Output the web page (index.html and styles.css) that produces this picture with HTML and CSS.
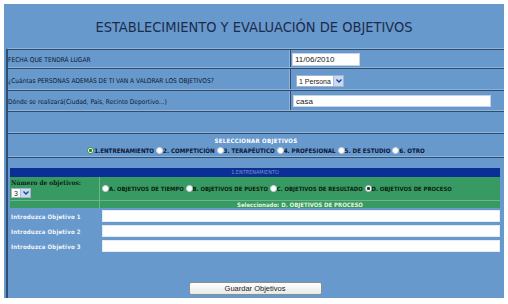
FILE: index.html
```html
<!DOCTYPE html>
<html lang="es">
<head>
    <meta charset="UTF-8">
    <title>Establecimiento y Evaluación de Objetivos</title>
    <link rel="stylesheet" href="styles.css">
</head>
<body>
    <div class="page">
        <h1 class="title">ESTABLECIMIENTO Y EVALUACIÓN DE OBJETIVOS</h1>

        <form class="frame">
            <div class="row r1">
                <div class="lbl">FECHA QUE TENDRÁ LUGAR</div>
                <div class="val"><input class="txt date" type="text" value="11/06/2010"></div>
            </div>
            <div class="row r2">
                <div class="lbl">¿Cuántas PERSONAS ADEMÁS DE TI VAN A VALORAR LOS OBJETIVOS?</div>
                <div class="val">
                    <div class="select persons"><span class="opt">1 Persona</span><span class="arrow"><svg width="6" height="4" viewBox="0 0 6 4"><path d="M0.5 0.5 L3 3 L5.5 0.5" fill="none" stroke="#1d3f8a" stroke-width="1.3"/></svg></span></div>
                </div>
            </div>
            <div class="row r3">
                <div class="lbl">Dónde se realizará(Ciudad, País, Recinto Deportivo...)</div>
                <div class="val"><input class="txt place" type="text" value="casa"></div>
            </div>
            <div class="row r4"></div>
            <div class="row r5">
                <div class="choose">
                    <div class="choose-title">SELECCIONAR OBJETIVOS</div>
                    <div class="options">
                        <span class="radio sel"></span>1.ENTRENAMIENTO
                        <span class="radio"></span>2. COMPETICIÓN
                        <span class="radio"></span>3. TERAPÉUTICO
                        <span class="radio"></span>4. PROFESIONAL
                        <span class="radio"></span>5. DE ESTUDIO
                        <span class="radio"></span>6. OTRO
                    </div>
                </div>
            </div>
            <div class="row r6">
                <div class="inner">
                    <div class="inner-head">1.ENTRENAMIENTO</div>
                    <div class="green g1">
                        <div class="gleft">
                            <div class="num-label">Número de objetivos:</div>
                            <div class="select num"><span class="opt">3</span><span class="arrow"><svg width="6" height="4" viewBox="0 0 6 4"><path d="M0.5 0.5 L3 3 L5.5 0.5" fill="none" stroke="#1d3f8a" stroke-width="1.3"/></svg></span></div>
                        </div>
                        <div class="gright kinds">
                            <span class="radio"></span>A. OBJETIVOS DE TIEMPO
                            <span class="radio"></span>B. OBJETIVOS DE PUESTO
                            <span class="radio"></span>C. OBJETIVOS DE RESULTADO
                            <span class="radio dot"></span>D. OBJETIVOS DE PROCESO
                        </div>
                    </div>
                    <div class="green g2">
                        <div class="gleft"></div>
                        <div class="gright picked">Seleccionado: D. OBJETIVOS DE PROCESO</div>
                    </div>
                    <div class="obj"><div class="obj-label">Introduzca Objetivo 1</div><input class="txt obj-input" type="text"></div>
                    <div class="obj"><div class="obj-label">Introduzca Objetivo 2</div><input class="txt obj-input" type="text"></div>
                    <div class="obj"><div class="obj-label">Introduzca Objetivo 3</div><input class="txt obj-input" type="text"></div>
                    <button type="button" class="save">Guardar Objetivos</button>
                </div>
            </div>
        </form>
    </div>
</body>
</html>
```

FILE: styles.css
```css
* {
    box-sizing: border-box;
}

body {
    margin: 0;
    background: #fff;
    font-family: "DejaVu Sans Condensed", "DejaVu Sans", sans-serif;
}

.page {
    margin: 4px 0 0 4px;
    width: 500px;
    height: 294px;
    background: #6899cc;
    display: flex;
    flex-direction: column;
}

.title {
    margin: 0;
    height: 45px;
    line-height: 47px;
    text-align: center;
    font-weight: normal;
    font-size: 14.5px;
    color: #1b2c4c;
}

.frame {
    flex: 1;
    margin: 0 0 0 2px;
    border-left: 2px solid #2f4d72;
    display: flex;
    flex-direction: column;
}

.row {
    display: flex;
    border-top: 1px solid #2e4c70;
    box-shadow: 0 -1px 0 #8fb2d8;
}

.r1 { height: 19px; }
.r2 { height: 22px; }
.r3 { height: 21px; }
.r4 { height: 22px; }
.r5 { height: 24px; }
.r6 { flex: 1; }

.lbl {
    width: 282px;
    display: flex;
    align-items: center;
    font-size: 6.6px;
    color: #0d1a33;
    padding-top: 2px;
}

.val {
    flex: 1;
    display: flex;
    align-items: center;
    border-left: 1px solid #2e4c70;
    box-shadow: -1px 0 0 #8fb2d8;
}

.txt {
    height: 13px;
    border: 1px solid #c4d2e2;
    background: #fff;
    padding: 0 2px;
    font-family: "Liberation Sans", Arial, sans-serif;
    font-size: 8px;
    color: #222;
}

.date {
    width: 68px;
    margin-left: 1px;
}

.place {
    width: 198px;
    margin-left: 2px;
    height: 12px;
}

.select {
    display: flex;
    align-items: center;
    background: #fff;
    border: 1px solid #9fb4cc;
    font-family: "Liberation Sans", Arial, sans-serif;
    font-size: 7px;
    color: #222;
    white-space: nowrap;
}

.opt {
    flex: 1;
    padding-left: 2px;
    overflow: hidden;
}

.arrow {
    width: 10px;
    height: 100%;
    display: flex;
    align-items: center;
    justify-content: center;
    background: #c9d9f2;
    border-left: 1px solid #aabfe0;
}

.persons {
    width: 48px;
    height: 12px;
    margin: 3px 0 0 5px;
}

.choose {
    flex: 1;
    text-align: center;
    padding-top: 3px;
}

.choose-title {
    font-size: 6px;
    font-weight: bold;
    color: #fff;
    letter-spacing: 0.3px;
    line-height: 8px;
}

.options {
    margin-top: 1px;
    font-size: 6.2px;
    line-height: 9px;
    font-weight: bold;
    color: #0b1838;
    white-space: nowrap;
}

.radio {
    display: inline-block;
    vertical-align: middle;
    width: 7px;
    height: 7px;
    margin-top: -2px;
    border-radius: 50%;
    background: #fff;
    border: 1px solid #c8d2dc;
}

.radio.sel {
    border-color: #3d9a3d;
    background: radial-gradient(circle, #2f7a2f 0 1.3px, #fff 1.8px);
}

.radio.dot {
    background: radial-gradient(circle, #333 0 1.3px, #fff 1.8px);
}

.inner {
    width: 490px;
    margin: 10px 0 0 2px;
    display: flex;
    flex-direction: column;
}

.inner-head {
    height: 9px;
    background: #0b2f95;
    color: #7d93c6;
    font-size: 5.5px;
    text-align: center;
    line-height: 9px;
}

.green {
    display: flex;
    background: #389a63;
}

.g1 {
    height: 23px;
}

.g2 {
    height: 8px;
    border-top: 1px solid #6cb58c;
}

.gleft {
    width: 90px;
    border-right: 1px solid #6cb58c;
    padding: 2px 0 0 1px;
}

.num-label {
    font-family: "DejaVu Serif Condensed", "DejaVu Serif", serif;
    font-size: 6.5px;
    font-weight: bold;
    color: #0d1f14;
}

.num {
    width: 20px;
    height: 10px;
    margin-top: 1px;
}

.gright {
    flex: 1;
}

.kinds {
    padding: 8px 0 0 2px;
    font-size: 5.9px;
    line-height: 8px;
    font-weight: bold;
    color: #0c1f12;
    white-space: nowrap;
}

.picked {
    text-align: center;
    font-size: 6px;
    font-weight: bold;
    color: #e4f4dc;
    line-height: 7px;
}

.obj {
    display: flex;
    align-items: center;
    height: 15px;
}

.obj-label {
    width: 92px;
    font-size: 6px;
    font-weight: bold;
    color: #f2f6fb;
    padding: 2px 0 0 1px;
    letter-spacing: 0.2px;
}

.obj-input {
    flex: 1;
    height: 12px;
    border-color: #e6ecf3;
}

.save {
    margin: 29px auto 0;
    width: 133px;
    height: 13px;
    padding: 0;
    border: 1px solid #8a8f96;
    border-radius: 2px;
    background: linear-gradient(#ffffff, #e8e8e4);
    font-family: "Liberation Sans", Arial, sans-serif;
    font-size: 7.5px;
    color: #222;
}
```
